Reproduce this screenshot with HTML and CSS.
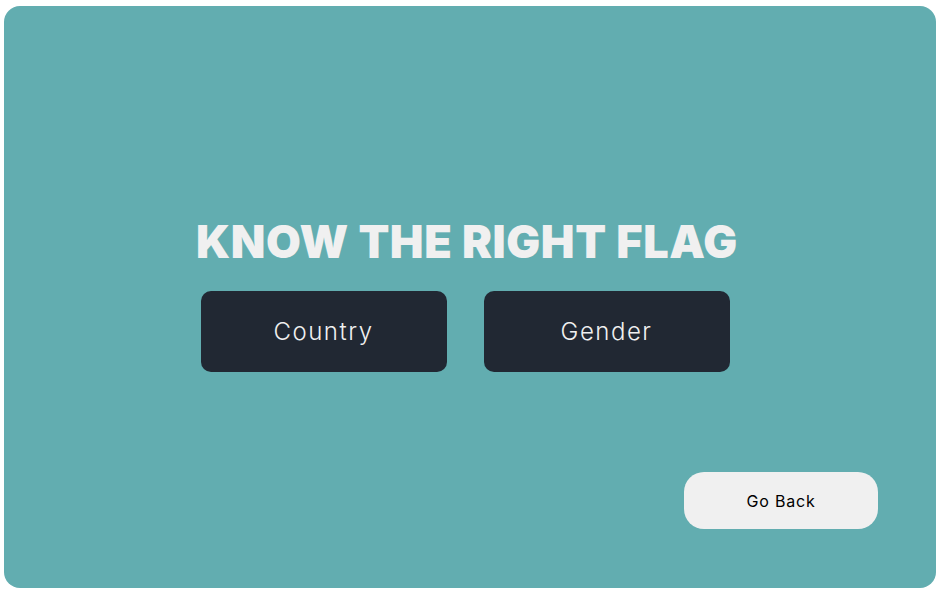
FILE: index.html
```html
<!DOCTYPE html>
<html lang="en">
<head>
<meta charset="utf-8">
<title>Know the right flag</title>
<link rel="stylesheet" href="styles.css">
</head>
<body>
<div class="card">
  <main class="main">
    <h1 class="title">KNOW THE RIGHT FLAG</h1>
    <div class="choices">
      <button class="choice">Country</button>
      <button class="choice">Gender</button>
    </div>
  </main>
  <div class="footer">
    <button class="back">Go Back</button>
  </div>
</div>
</body>
</html>
```
FILE: styles.css
```css
html, body {
  margin: 0;
  padding: 0;
  background: #ffffff;
}
body {
  padding: 6px 4px 4px 4px;
  font-family: Inter, "Noto Sans", sans-serif;
}
.card {
  box-sizing: border-box;
  height: 582px;
  border-radius: 16px;
  background: #62adb0;
  display: flex;
  flex-direction: column;
}
.main {
  display: flex;
  flex-direction: column;
  align-items: center;
  padding-right: 10px;
  padding-top: 208px;
}
.title {
  margin: 0 0 0 4px;
  font-size: 45px;
  line-height: 56px;
  font-weight: 900;
  letter-spacing: 0.6px;
  color: #f0f0f0;
}
.choices {
  display: flex;
  gap: 37px;
  margin-top: 21px;
}
.choice {
  width: 246px;
  height: 81px;
  border: none;
  border-radius: 10px;
  background: #212833;
  color: #f0f0f0;
  font-family: Inter, "Noto Sans", sans-serif;
  font-size: 24px;
  font-weight: 300;
  letter-spacing: 1.5px;
  cursor: pointer;
}
.footer {
  margin-top: auto;
  display: flex;
  justify-content: flex-end;
  padding: 0 58px 59px 0;
}
.back {
  width: 194px;
  height: 57px;
  border: none;
  border-radius: 20px;
  background: #f0f0f0;
  color: #000000;
  font-family: Inter, "Noto Sans", sans-serif;
  font-size: 16px;
  font-weight: 400;
  letter-spacing: 0.8px;
  cursor: pointer;
}
```
